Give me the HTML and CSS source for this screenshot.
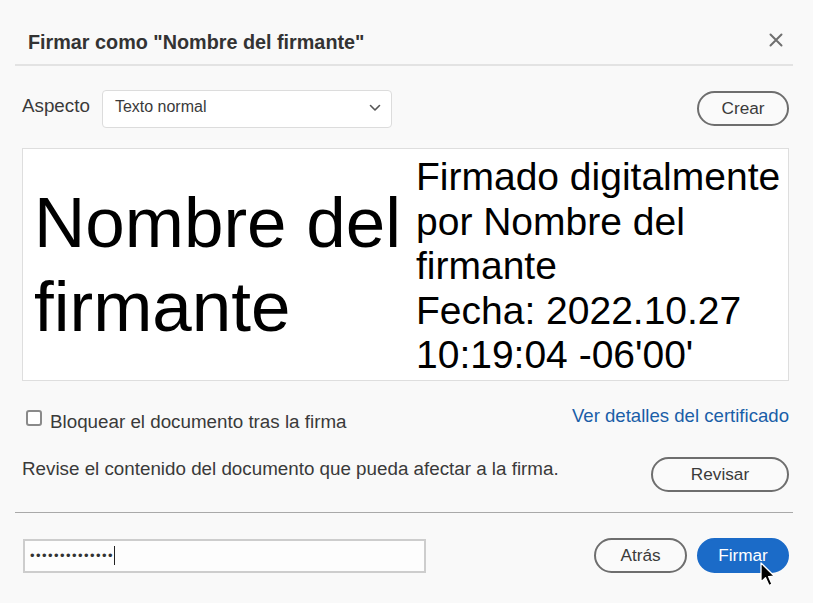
FILE: index.html
```html
<!DOCTYPE html>
<html lang="es">
<head>
<meta charset="utf-8">
<title>Firmar como "Nombre del firmante"</title>
<link rel="stylesheet" href="styles.css">
</head>
<body>
<div class="dialog">
  <header class="head">
    <h1 class="title">Firmar como "Nombre del firmante"</h1>
    <button class="close" aria-label="Cerrar">
      <svg width="14" height="14" viewBox="0 0 14 14"><path d="M1.5 1.5 L12.5 12.5 M12.5 1.5 L1.5 12.5" stroke="#6f6f6f" stroke-width="2" fill="none" stroke-linecap="round"/></svg>
    </button>
  </header>
  <div class="rule rule-top"></div>

  <div class="content">
    <div class="row aspect-row">
      <div class="aspect-left">
        <span class="label">Aspecto</span>
        <div class="select">
          <span>Texto normal</span>
          <svg class="chev" width="12" height="8" viewBox="0 0 12 8"><path d="M1.5 1.5 L6 6 L10.5 1.5" stroke="#555" stroke-width="1.6" fill="none" stroke-linecap="round" stroke-linejoin="round"/></svg>
        </div>
      </div>
      <button class="btn btn-crear">Crear</button>
    </div>

    <div class="preview">
      <div class="sig-name">Nombre del<br>firmante</div>
      <div class="sig-info">Firmado digitalmente<br>por Nombre del<br>firmante<br>Fecha: 2022.10.27<br>10:19:04 -06'00'</div>
    </div>

    <div class="row check-row">
      <label class="check"><span class="box"></span><span>Bloquear el documento tras la firma</span></label>
      <a class="link" href="#">Ver detalles del certificado</a>
    </div>

    <div class="row review-row">
      <span class="text">Revise el contenido del documento que pueda afectar a la firma.</span>
      <button class="btn btn-revisar">Revisar</button>
    </div>
  </div>

  <div class="rule rule-bottom"></div>

  <div class="footer">
    <div class="pwd"><span class="dots">••••••••••••••</span><span class="caret"></span></div>
    <div class="actions">
      <button class="btn btn-atras">Atrás</button>
      <button class="btn btn-primary">Firmar
        <svg class="pointer" width="16" height="26" viewBox="0 0 16 26"><path d="M1 1 L1 20 L5.5 15.8 L9 23.5 L12 22.2 L8.6 14.6 L14.5 14.2 Z" fill="#000" stroke="#fff" stroke-width="1.3" stroke-linejoin="round"/></svg>
      </button>
    </div>
  </div>
</div>
</body>
</html>
```

FILE: styles.css
```css
* { box-sizing: border-box; }
html, body { margin: 0; padding: 0; }
body {
  background: #f9f9f9;
  font-family: "Liberation Sans", Arial, sans-serif;
  color: #3a3a3a;
  width: 813px;
  height: 603px;
  overflow: hidden;
}
.dialog {
  padding: 0 20px 0 15px;
}
.head {
  display: flex;
  justify-content: space-between;
  align-items: center;
  padding: 30px 10px 0 13px;
  height: 53px;
}
.title {
  margin: 0;
  font-size: 19.8px;
  line-height: 22px;
  font-weight: bold;
  color: #333;
}
.close {
  border: 0;
  background: none;
  padding: 0;
  width: 14px;
  height: 14px;
  margin-top: -4px;
  display: flex;
}
.rule { height: 2px; }
.rule-top { background: #e3e3e3; margin-top: 11px; }
.rule-bottom { background: #a9a9a9; height: 1px; margin-top: 20px; }

.content {
  padding: 0 4px 0 7px;
}
.row {
  display: flex;
  justify-content: space-between;
  align-items: center;
}
.aspect-row { margin-top: 24px; height: 38px; }
.aspect-left { display: flex; align-items: center; gap: 12px; }
.label { font-size: 18.8px; margin-top: -6px; color: #3a3a3a; }
.select {
  width: 290px;
  height: 38px;
  background: #fff;
  border: 1px solid #dcdcdc;
  border-radius: 4px;
  display: flex;
  align-items: center;
  justify-content: space-between;
  padding: 0 10px 0 12px;
  font-size: 16px;
  color: #3a3a3a;
}
.select span { margin-top: -5px; }
.chev { margin-top: -3px; }

.btn {
  font-family: "Liberation Sans", Arial, sans-serif;
  font-size: 17.2px;
  height: 35px;
  border-radius: 18px;
  border: 2px solid #6e6e6e;
  background: #fafafa;
  color: #3a3a3a;
  padding: 0;
  display: flex;
  align-items: center;
  justify-content: center;
}
.btn-crear { width: 92px; margin-top: -2px; }
.btn-revisar { width: 138px; }
.btn-atras { width: 93px; }
.btn-primary {
  width: 92px;
  background: #1b6bc8;
  border-color: #1b6bc8;
  color: #fff;
  position: relative;
}
.pointer {
  position: absolute;
  left: 61px;
  top: 22px;
}

.preview {
  margin-top: 20px;
  height: 233px;
  background: #fff;
  border: 1px solid #dedede;
  display: grid;
  grid-template-columns: 382px 1fr;
  align-items: center;
  padding: 0 6px 0 11px;
  color: #000;
}
.sig-name {
  font-size: 71px;
  line-height: 84px;
  margin-top: 0px;
}
.sig-info {
  font-size: 39px;
  line-height: 44.5px;
  margin-top: 4px;
}

.check-row { margin-top: 25px; height: 24px; }
.check {
  display: flex;
  align-items: center;
  gap: 8px;
  font-size: 18.8px;
  margin-left: 4px;
}
.check span:last-child { margin-top: 7px; }
.box {
  width: 16px;
  height: 16px;
  border: 2px solid #8a8a8a;
  border-radius: 3px;
  background: #fff;
}
.link {
  color: #1a5ea8;
  text-decoration: none;
  font-size: 18.6px;
  margin-top: -4px;
}

.review-row { margin-top: 27px; height: 35px; }
.text { font-size: 18.8px; margin-top: -12px; }

.footer {
  display: flex;
  justify-content: space-between;
  align-items: center;
  padding: 0 4px 0 8px;
  margin-top: 25px;
}
.pwd {
  width: 403px;
  height: 34px;
  border: 2px solid #cdcdcd;
  background: #fdfdfd;
  display: flex;
  align-items: center;
  padding-left: 5px;
}
.dots {
  font-size: 13px;
  letter-spacing: 1.45px;
  color: #333;
}
.caret {
  width: 1px;
  height: 19px;
  background: #222;
  margin-left: 0px;
}
.actions {
  display: flex;
  gap: 10px;
}
```
